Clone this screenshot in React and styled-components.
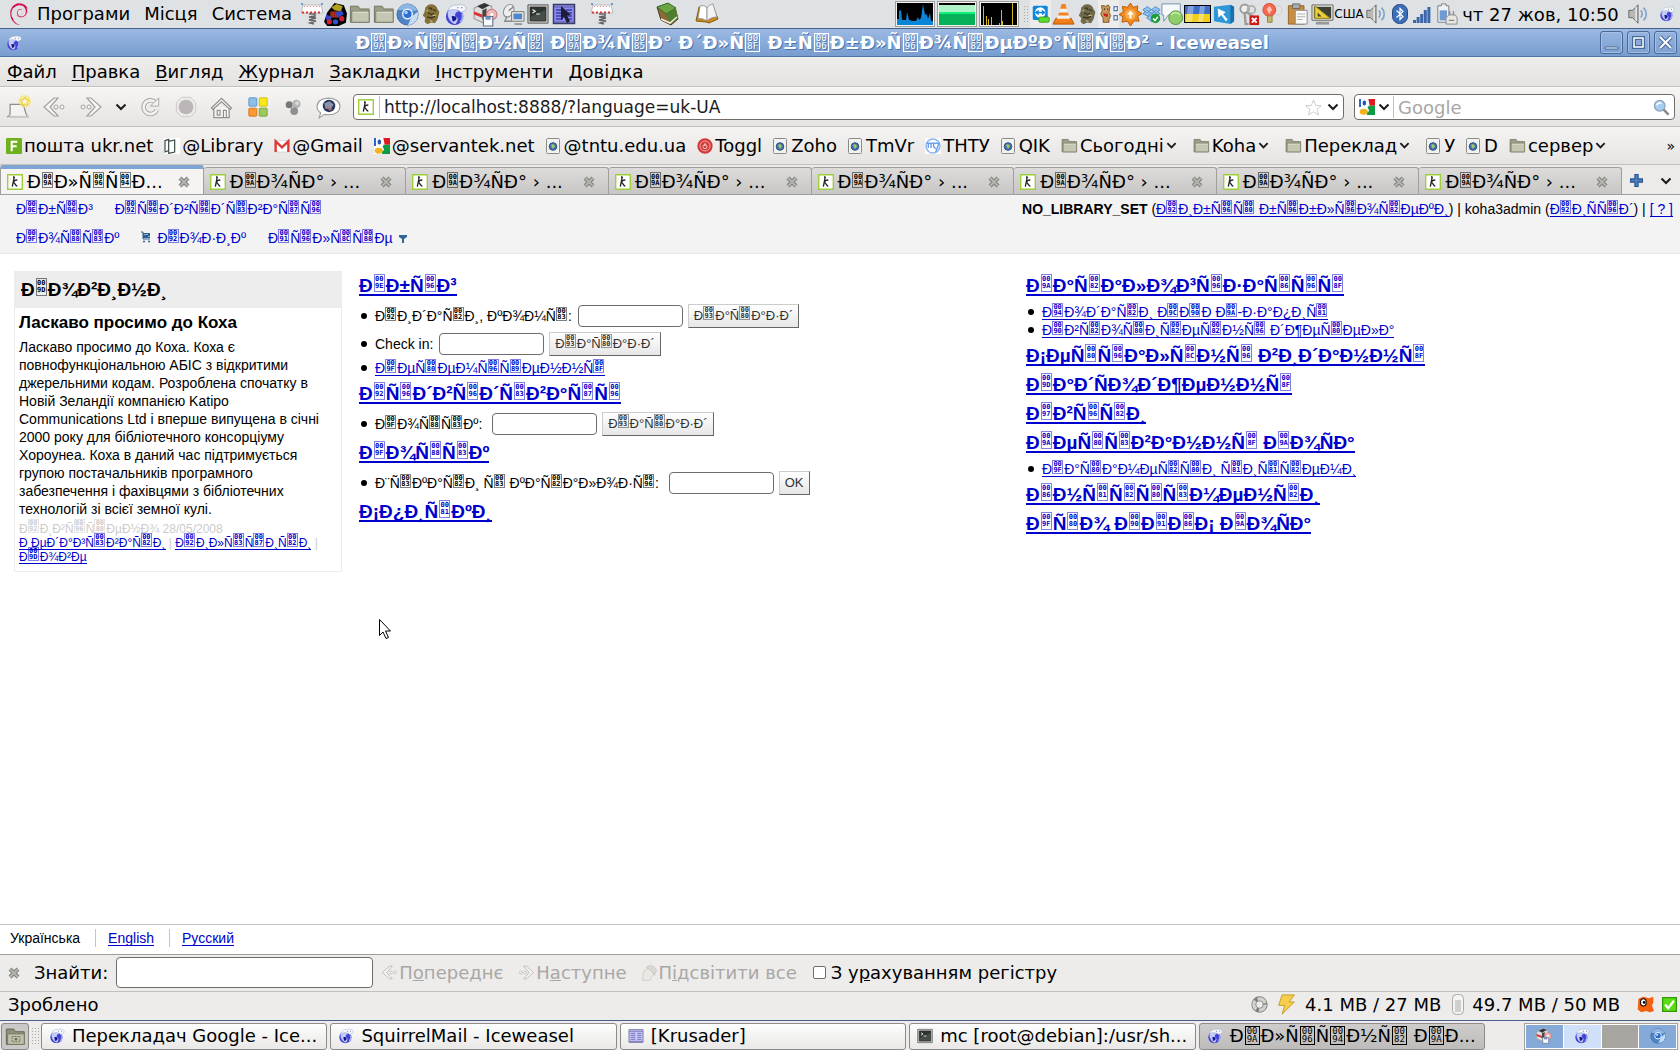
import React from 'react'
import styled, { createGlobalStyle, css } from 'styled-components'
import { SiDebian } from 'react-icons/si'

const GlobalStyle = createGlobalStyle`
    * { box-sizing: border-box; }
    html, body, #root { height: 100%; }
    body {
        margin: 0;
        background: #edeceb;
        color: #000;
        font-family: "DejaVu Sans", sans-serif;
        font-size: 18px;
        overflow: hidden;
    }
    button, input { font-family: inherit; font-size: inherit; color: inherit; }
    svg { display: block; flex: none; }
`

/* ---------- text decoded with the wrong charset ---------- */

const hexSizes = {
    small: css`width: 11px; height: 14px; margin: -4px 1px 0 0; font-size: 7px; line-height: 6px;`,
    tab: css`width: 11px; height: 16px; margin: -4px 1px 0; font-size: 7px; line-height: 6px; padding-top: 1px;`,
    heading: css`width: 11px; height: 18px; margin: -4px 1px 0; font-size: 7px; line-height: 7px; padding-top: 1px;`,
    title: css`
        width: 15px;
        height: 19px;
        margin: -4px 1px -3px;
        border-color: currentColor;
        font-size: 9px;
        line-height: 8px;
    `,
}

const HexBox = styled.span`
    display: inline-block;
    overflow: hidden;
    border: 1px solid color-mix(in srgb, currentColor 50%, transparent);
    font-family: "DejaVu Sans Mono", monospace;
    font-weight: ${p => (p.$size === 'title' ? 400 : 700)};
    text-align: center;
    white-space: pre;
    ${p => hexSizes[p.$size]}
`

// UTF-8 bytes shown as Latin-1, control bytes become small code boxes
function Garbled({ text, size = 'small', keepNel }) {
    const out = []
    let run = ''
    new TextEncoder().encode(text).forEach((b, i) => {
        if (b >= 0x80 && b < 0xa0) {
            if (b === 0x85 && !keepNel) return
            out.push(run)
            run = ''
            out.push(<HexBox key={i} $size={size}>{'00\n' + b.toString(16).toUpperCase()}</HexBox>)
        } else {
            run += String.fromCharCode(b)
        }
    })
    out.push(run)
    return <>{out}</>
}

/* ---------- icons ---------- */

const Svg = ({ s = 24, w, h, children, box = 24 }) => (
    <svg width={w || s} height={h || s} viewBox={`0 0 ${box} ${box}`} fill="none" aria-hidden="true">{children}</svg>
)

const SpringIcon = () => (
    <Svg s={24}>
        <path d="M3 3 1 11h22L21 3z" fill="#fff" stroke="#bbb" />
        <path d="M2 10.500h20" stroke="#d33" strokeWidth="2" strokeDasharray="2 2" />
        <path d="M4 4.500h16" stroke="#e88" strokeDasharray="1 2" />
        <path d="M1 2h2M21 2h2" stroke="#48c" strokeWidth="1.500" />
        <path d="M9 12h6v2l-6 1 7 1-7 2 7 1-6 2 4 1" stroke="#666" strokeWidth="1.500" />
    </Svg>
)
const TrainIcon = () => (
    <Svg s={25}>
        <path d="M4 10 11 1l9 2 3 8-1 9-7 3H4L1 19z" fill="#000" />
        <path d="m8 5 5-3 6 2-2 5-6-1z" fill="#b3a11d" />
        <path d="M7 9h8v6H7z" fill="#a62a1c" />
        <path d="m3 12 5 2v5l-5-2zM12 10l6-2 2 4-6 3z" fill="#3346c8" />
        <circle cx="6" cy="19" r="2.500" fill="#c23" /><circle cx="12" cy="19" r="2.500" fill="#35c" /><circle cx="18" cy="16" r="2.500" fill="#c23" />
    </Svg>
)
const FolderIcon = ({ s = 22 }) => (
    <Svg s={s}>
        <path d="M1.500 21V3.500h8.500l2 3h10V21z" fill="#9b9d84" stroke="#6f715c" />
        <path d="M3 20.500V9h19v12H3z" fill="#c5c7b2" stroke="#7c7e69" />
        <path d="M4 10h17" stroke="#e5e6da" />
    </Svg>
)
const ChromiumIcon = ({ s = 23 }) => (
    <Svg s={s}>
        <circle cx="12" cy="12" r="11" fill="#4f83c4" stroke="#406ba5" />
        <path d="M2 7a11 11 0 0 1 20 1h-9z" fill="#8db6e4" />
        <path d="M22.500 9a11 11 0 0 1-10 14l4-9z" fill="#c7dcf3" />
        <circle cx="12" cy="11.500" r="5" fill="#2d6fd0" stroke="#e5effa" strokeWidth="1.500" />
        <circle cx="10.500" cy="10" r="1.800" fill="#a9d0ff" />
    </Svg>
)
const BeastIcon = ({ c = '#83703a' }) => (
    <Svg s={21}>
        <path d="M8 1c4-2 10 0 11 5l2 3-2 8-3 5-4-1-5 2-3-3 1-4-3-3 2-4 1-5z" fill={c} />
        <path d="M9 5c2-1 4 0 3 2M14 6l3 2M8 10l4 2 3-1M7 15l5 1 4-2" stroke="#3d351b" strokeWidth="1.500" />
        <path d="m6 8 2-1M13 13l4 0M10 19l3 1" stroke="#c3b377" strokeWidth="1.400" />
    </Svg>
)
const WeaselIcon = ({ s = 16 }) => (
    <Svg s={s}>
        <circle cx="11" cy="14" r="9" fill="#4343d4" />
        <path d="M4 9c3-3 9-3 11 0-3 0-4 3-3 5 3 1 3 4 0 8-5-1-9-7-8-13z" fill="#c3cbfa" />
        <path d="M8 14c2-1 5 0 5 2s-3 4-4 3z" fill="#15158e" />
        <path d="M4 8c2-5 6-6 10-6 4-1 9 0 9 4 0 2-3 2-5 4-2-3-8-4-14-2z" fill="#f4f7fb" stroke="#a8b6cc" strokeWidth=".8" />
        <path d="M18 5h1M14 5h1" stroke="#345" strokeWidth="1.200" />
        <path d="M19 11c1 3 1 6-2 9" stroke="#a3abf4" strokeWidth="2" />
    </Svg>
)
const PackageIcon = ({ s = 25 }) => (
    <Svg s={s}>
        <path d="m1 6 8-4 9 2v12l-8 4-9-4z" fill="#ddd" stroke="#999" />
        <path d="m4 4 7-3 5 2-7 4z" fill="#333" /><path d="m1 9 8 3v3l-8-3z" fill="#d33" /><path d="m9 8 4-2v9l-4 2z" fill="#444" />
        <circle cx="18" cy="12" r="5" fill="#f1b8b8" stroke="#c77" /><circle cx="18" cy="12" r="1.500" fill="#fff" />
        <path d="M10 14h9v9h-9z" fill="#f8fafc" stroke="#5a6f8c" /><path d="M12 14h5v3h-5z" fill="#6f8fb7" />
    </Svg>
)
const SatelliteIcon = () => (
    <Svg s={23}>
        <ellipse cx="7" cy="8" rx="5" ry="7" transform="rotate(30 7 8)" fill="#eee" stroke="#888" />
        <path d="m7 8 5-4M5 14l-2 5h7" stroke="#888" strokeWidth="1.500" />
        <path d="M10 9h13v10H10z" fill="#e8e8e4" stroke="#777" /><path d="M12 11h9v6h-9z" fill="#4d88cc" />
        <path d="M13 22h8" stroke="#999" strokeWidth="2" />
    </Svg>
)
const TerminalIcon = ({ s = 22 }) => (
    <Svg s={s}>
        <path d="M1 2h22v20H1z" fill="#c7c8c4" stroke="#555" />
        <path d="M3.500 4.500h17v15h-17z" fill="#2e3632" stroke="#222" />
        <path d="m6 7 3 2-3 2M10 12h4" stroke="#e8efe9" strokeWidth="1.300" />
        <path d="M4 15 20 8v11H4z" fill="#fff" opacity=".12" />
    </Svg>
)
const KrusaderIcon = ({ s = 24, arrow }) => (
    <Svg s={s}>
        <path d="M1.500 2.500h21v19h-21z" fill={arrow ? '#8c8cf0' : '#c9c9f6'} stroke={arrow ? '#3b3b66' : '#7a7aa8'} strokeWidth="1.500" />
        <path d="M2 5h20M2 20h20" stroke="#5b5ba0" />
        <path d="M4 8h7M4 11h7M4 14h7M4 17h7M14 8h6M14 11h6M14 14h6M14 17h6" stroke={arrow ? '#3c3ca8' : '#6a6ab4'} strokeWidth="1.300" />
        {arrow && <path d="m9 4 10 9-4 .5 3 6-3 1.500-3-6-3 3z" fill="#1d1d36" />}
    </Svg>
)
const GreenBookIcon = () => (
    <Svg s={24}>
        <path d="m2 5 4 13 10 5 7-6-3-11-7-4z" fill="#8a6a3a" stroke="#4f3d1d" />
        <path d="m2 5 11-4 8 5-10 6z" fill="#6ca544" stroke="#3e6a24" />
        <path d="m11 12 10-6 2 10-7 6z" fill="#4d7f2e" /><path d="m6 17 9 4 7-6" stroke="#f4efe0" strokeWidth="1.500" />
    </Svg>
)
const OpenBookIcon = () => (
    <Svg s={24}>
        <path d="m1 19 3-14h7l2 2 5-2 5 12-9 4-3-1z" fill="#c98b1d" stroke="#8a5a0a" />
        <path d="m3 17 2-13c3-1 6 0 7 2v13c-3-2-6-3-9-2z" fill="#fff" stroke="#888" strokeWidth=".8" />
        <path d="M12 6c1-2 4-4 6-4l4 13c-4 0-7 1-10 4z" fill="#f3f3f3" stroke="#888" strokeWidth=".8" />
    </Svg>
)
const TeamViewerIcon = () => (
    <Svg s={18}>
        <rect x="1" y="1" width="20" height="19" rx="2" fill="#1086e0" />
        <circle cx="11" cy="10" r="7" fill="#fff" /><path d="M5 10h12M5 10l3-2v4zM17 10l-3-2v4z" stroke="#1086e0" strokeWidth="1.800" fill="#1086e0" />
        <rect x="9" y="16" width="14" height="7" rx="2" fill="#5cdc2d" stroke="#278a0c" />
    </Svg>
)
const ConeIcon = () => (
    <Svg s={23}>
        <path d="M1 22 4 16h16l3 6z" fill="#ef7d14" stroke="#b65606" />
        <path d="M10 1h4l5 17c-3 2-11 2-14 0z" fill="#f58220" />
        <path d="m8.500 6h7l1.200 4H7.200zM6.200 13h11.600l1 3.500H5.200z" fill="#f1f1f1" />
    </Svg>
)
const BearIcon = () => (
    <Svg s={20}>
        <path d="M3 2h3l2 1 3-2 2 3-1 6 2 4-2 4v4H5v-5L2 12l2-4z" fill="#c9995a" stroke="#6c4a1f" />
        <path d="m5 11 6 1-1 4-4-2z" fill="#c22" /><path d="M6 6h1M10 6h1" stroke="#000" strokeWidth="1.500" />
        <path d="M18 3h4v5h-4zM18 14h4v5h-4z" fill="#fff" stroke="#567daa" strokeWidth="1.500" />
    </Svg>
)
const SunIcon = () => (
    <Svg s={23}>
        <path d="m12 0 2.600 4.600L19.500 3l-.3 5.200L24 11l-4.400 2.800L21 19l-5.200-.4L12 24l-3.200-5L3 20l1.200-5.600L0 12l4.500-3L3.500 3.500l5.300 1z" fill="#ee8a20" stroke="#b85c08" />
        <circle cx="12" cy="12" r="5.500" fill="#f7ae4d" /><path d="m12 8 3.500 4H13v4h-2v-4H8.500z" fill="#fff" />
    </Svg>
)
const DropboxIcon = () => (
    <Svg s={19}>
        <path d="m7 2 5 4-6 4-5-4zM17 2l-5 4 6 4 5-4zM7 14l5-4-6-3-5 4zM17 14l-5-4 6-3 5 4zM6 16l6-4 6 4-6 5z" fill="#8cc4f2" stroke="#3a7fc0" />
        <circle cx="17" cy="17" r="6" fill="#1c9c3a" /><path d="m14 17 2.500 2.500L20 15" stroke="#fff" strokeWidth="2" />
    </Svg>
)
const ChatIcon = () => (
    <Svg s={22}>
        <path d="M1 1h20v12H8l-5 7v-7H1z" fill="#f7fafc" stroke="#6f8da8" />
        <circle cx="16" cy="16" r="7.500" fill="#8fce68" stroke="#4f8f32" /><path d="M11 13c2-3 7-4 10 0" stroke="#d2efc0" strokeWidth="1.500" />
    </Svg>
)
const FlagIcon = () => (
    <svg width="27" height="18" viewBox="0 0 27 18" aria-hidden="true">
        <path d="M0 0h27v18H0z" fill="#000" /><path d="M1 1h25v8H1z" fill="#3c6fc8" /><path d="M1 9h25v8H1z" fill="#f2cf1b" />
        <path d="M4 1h6l-2 16H2zM16 1h5l-2 16h-5z" fill="#fff" opacity=".35" />
    </svg>
)
const BlueArrowIcon = () => (
    <Svg s={22}>
        <path d="m1 4 18-2 4 2v16l-4 3L1 20z" fill="#2e97d8" /><path d="m19 2 4 2v16l-4 3z" fill="#1b6fae" />
        <path d="m5 6 9 4-3 2 5 6-2 2-5-7-3 3z" fill="#fff" />
    </Svg>
)
const KeysIcon = () => (
    <Svg s={23}>
        <circle cx="8" cy="6" r="4.500" fill="#eee" stroke="#9c9c98" strokeWidth="2" /><circle cx="15" cy="7" r="4" stroke="#b0b0ac" strokeWidth="2" />
        <path d="m8 10 1 12h3M9 9l9 6" stroke="#9c9c98" strokeWidth="2.500" />
        <path d="M13 13h10v10H13z" fill="#cc1b16" /><path d="m15.500 15.500 5 5M20.500 15.500l-5 5" stroke="#fff" strokeWidth="2" />
    </Svg>
)
const BulbIcon = () => (
    <Svg s={22}>
        <circle cx="17" cy="8" r="5" fill="#e2e2e2" stroke="#ccc" />
        <circle cx="8" cy="7.500" r="7" fill="#f2694f" stroke="#d3472e" /><path d="m8 3 3 4-3 5-3-5z" fill="#fbc3b6" />
        <path d="M6 14h5v7H6z" fill="#c7b76a" stroke="#8f8038" />
    </Svg>
)
const ClipboardIcon = () => (
    <Svg s={22}>
        <path d="M1.500 3h17v20h-17z" fill="#c98f3e" stroke="#8f5f1c" /><path d="M6 1h8v5H6z" fill="#aaa" stroke="#666" />
        <path d="M9 8h13v15H9z" fill="#f9f9f8" stroke="#888" /><path d="M11 12h9M11 15h9M11 18h6" stroke="#aaa" />
    </Svg>
)
const RulerScreenIcon = () => (
    <Svg s={23}>
        <path d="M1 2h22v16H1z" fill="#e1e1dc" stroke="#666" /><path d="M3 4h18v12H3z" fill="#3e4138" />
        <path d="M4 3v13h16z" fill="#e9cf3a" stroke="#9a8412" /><path d="M7 10v4h4z" fill="#3e4138" /><path d="M5 21h14" stroke="#999" strokeWidth="3" />
    </Svg>
)
const SpeakerIcon = () => (
    <Svg s={22}>
        <path d="M2 8h4l6-6v20l-6-6H2z" fill="#b9bab6" stroke="#5e605c" /><path d="M10 4v16" stroke="#eee" strokeWidth="1.500" />
        <path d="M15 8c2 2 2 6 0 8M18 5c4 4 4 10 0 14" stroke="#7fa2cc" strokeWidth="1.800" />
    </Svg>
)
const BluetoothIcon = () => (
    <svg width="16" height="20" viewBox="0 0 16 20" fill="none" aria-hidden="true">
        <rect x=".5" y=".5" width="15" height="19" rx="7" fill="#3c6fb8" stroke="#234a86" />
        <path d="m4.500 6.500 6.500 6-3 3v-11l3 3-6.500 6" stroke="#fff" strokeWidth="1.200" />
    </svg>
)
const SignalIcon = () => (
    <svg width="18" height="17" viewBox="0 0 18 17" aria-hidden="true">
        {[3, 6, 9, 13, 16].map((h, i) => <rect key={h} x={i * 3.600} y={17 - h} width="3" height={h} fill="#3b66ab" />)}
    </svg>
)
const BatteryIcon = () => (
    <Svg s={22}>
        <path d="M6 1h5v2h3v18H2V3h4z" fill="#eef2f7" stroke="#777" /><path d="M4 8h8v11H4z" fill="#6f9bd0" />
        <path d="M11 23v-7l3-3h7l2 3v7z" fill="#e6e6e3" stroke="#888" /><path d="M15 13V9M19 13V9M14 19h6" stroke="#888" strokeWidth="1.500" />
    </Svg>
)

const NewTabIcon = () => (
    <Svg s={25}>
        <path d="M1 21c3 0 3-1 3-12h12c2 0 2 12 6 12" fill="#f4f3f2" stroke="#8e8d8a" strokeWidth="1.200" />
        <path d="M3 21h19" stroke="#c9c8c5" strokeWidth="2" />
        <circle cx="18" cy="6" r="6" fill="#f8e36b" opacity=".7" /><path d="m18 2 1.200 2.800 3 .2-2.300 2 .8 3-2.700-1.600L15.300 10l.8-3-2.300-2 3-.2z" fill="#fffbe0" stroke="#e6bd1b" strokeWidth=".7" />
    </Svg>
)
const ArrowIcon = ({ flip, s = 24 }) => (
    <Svg s={s}>
        <g transform={flip ? 'matrix(-1 0 0 1 24 0)' : undefined}>
            <path d="M12 3h4l-8 9 8 9h-4L2 12z" fill="#f6f6f5" stroke="#a2a19e" strokeWidth="1.200" />
            <circle cx="14" cy="12" r="2" fill="#f6f6f5" stroke="#a2a19e" /><circle cx="20" cy="12" r="2" fill="#f6f6f5" stroke="#a2a19e" />
        </g>
    </Svg>
)
const ChevronIcon = ({ s = 11 }) => (
    <Svg s={s} box={12}><path d="m1.500 3.500 4.500 4.500 4.500-4.500" stroke="#1a1a1a" strokeWidth="2" /></Svg>
)
const ReloadIcon = () => (
    <Svg s={22}>
        <path d="M18 7a7.500 7.500 0 1 0 1.500 8" stroke="#a5a4a1" strokeWidth="5" /><path d="M18 7a7.500 7.500 0 1 0 1.500 8" stroke="#f2f1f0" strokeWidth="3" />
        <path d="M21.500 2v9h-9z" fill="#f2f1f0" stroke="#a5a4a1" />
    </Svg>
)
const StopIcon = () => (
    <Svg s={22}>
        <path d="M7 1.500h10L22.500 7v10L17 22.500H7L1.500 17V7z" fill="#ecebea" stroke="#c9c8c6" /><circle cx="12" cy="12" r="8" fill="#bcb6b8" />
    </Svg>
)
const HomeIcon = () => (
    <Svg s={23}>
        <path d="M4 12v10.500h16V12" fill="#f5f5f4" stroke="#8f8e8b" strokeWidth="1.300" />
        <path d="M1.500 12.500 12 2.500l10.500 10L21 14l-9-8-9 8z" fill="#f5f5f4" stroke="#8f8e8b" strokeWidth="1.200" />
        <path d="M7.500 20v-5h3v5zM14 22v-7h3v7" stroke="#8f8e8b" strokeWidth="1.200" />
    </Svg>
)
const GridIcon = () => (
    <Svg s={20}>
        <rect x="1" y="1" width="9.500" height="10" rx="1" fill="#8cc0e8" stroke="#4b8fc4" /><rect x="13.500" y="1" width="9.500" height="10" rx="1" fill="#fbe916" stroke="#c8b400" />
        <rect x="1" y="13.500" width="9.500" height="9.500" rx="1" fill="#fd9a35" stroke="#d46c05" /><rect x="13.500" y="13.500" width="9.500" height="9.500" rx="1" fill="#9cc95b" stroke="#6b9c2a" />
    </Svg>
)
const BallsIcon = () => (
    <Svg s={17}>
        <circle cx="6" cy="8" r="5" fill="#777" /><circle cx="16" cy="7" r="6" fill="#b5b5b5" /><circle cx="13" cy="17" r="5.500" fill="#8f8f8f" /><circle cx="17" cy="6" r="2.500" fill="#ddd" />
    </Svg>
)
const SpeechIcon = () => (
    <Svg s={25}>
        <path d="M12 3c7 0 11 3.500 11 8s-4 8-11 8c-2 0-3 0-4-.5L3 22l1.500-5C2 15.500 1 13.500 1 11c0-4.500 4-8 11-8z" fill="#fff" stroke="#9a9a98" />
        <circle cx="12.500" cy="10.500" r="6" fill="#26365f" /><path d="m8 8 5-2 4 3-3 5-5-1z" fill="#8d92a6" /><path d="m10 11 3 4 3-1z" fill="#b56b52" />
    </Svg>
)
const StarIcon = () => (
    <Svg s={17}><path d="m12 1.500 3 7.500 8 .5-6 5 2 8-7-4.500-7 4.500 2-8-6-5 8-.5z" fill="#fff" stroke="#c9c8c6" strokeWidth="1.300" /></Svg>
)
const GoogleIcon = () => (
    <Svg s={16}>
        <path d="M0 0h24v24H0z" fill="#fff" /><path d="M14 0h10v10h-8z" fill="#e01a22" /><path d="M13 10h11v14H12z" fill="#0d9b46" />
        <path d="M0 0h3v12H0z" fill="#2c67c8" /><ellipse cx="8" cy="6" rx="3.500" ry="4.500" fill="#2458b8" stroke="#fff" strokeWidth="1.500" />
        <path d="m10 11 5 5-1 4-4-4z" fill="#fff" /><ellipse cx="7" cy="19" rx="6" ry="4.500" fill="#f3b31c" /><circle cx="12" cy="11" r="2" fill="#fff" />
    </Svg>
)
const SearchIcon = () => (
    <Svg s={17}>
        <circle cx="9.500" cy="9.500" r="7.500" fill="#a9cdf0" stroke="#8aa2bd" strokeWidth="1.800" /><path d="M5 9c1-3 4-4 7-3" stroke="#fff" strokeWidth="2" />
        <path d="m15 15 7 7" stroke="#888" strokeWidth="3.500" />
    </Svg>
)
const FIcon = () => (
    <Svg s={16}>
        <rect width="24" height="24" rx="2" fill="#6fb01e" /><path d="M8.500 20V5.500H17M8 12.500h8" stroke="#fff" strokeWidth="3" />
    </Svg>
)
const LibraryIcon = () => (
    <Svg s={16}>
        <path d="M0 0h24v24H0z" fill="#fff" /><path d="M1.500 4 7 2v17l-5.500 2zM7 5l9-2v18l-9 2z" stroke="#3b4a45" strokeWidth="1.800" />
    </Svg>
)
const GmailIcon = () => (
    <Svg s={16}>
        <path d="M1 4h22v17H1z" fill="#fff" stroke="#ccc" /><path d="M2.500 21V5l9.500 9 9.500-9v16" stroke="#db3b36" strokeWidth="3.500" />
    </Svg>
)
const PageIcon = () => (
    <svg width="16" height="16" viewBox="0 0 16 16" fill="none" aria-hidden="true">
        <rect x=".5" y=".5" width="13" height="15" rx="1" fill="#f2f2f0" stroke="#8a8b86" />
        <circle cx="7" cy="8.500" r="3.800" fill="#4374b3" stroke="#2c4f84" /><path d="m5 7 2-1 2 2-2 3z" fill="#a8c55a" />
    </svg>
)
const TogglIcon = () => (
    <Svg s={16}>
        <circle cx="12" cy="12" r="11.500" fill="#d23b3b" /><circle cx="12" cy="12" r="7.500" stroke="#f3a3a0" strokeWidth="1.500" /><path d="M12 8v4" stroke="#fff" strokeWidth="1.500" /><circle cx="12" cy="13" r="3" stroke="#f7c4c0" strokeWidth="1.500" />
    </Svg>
)
const TntuIcon = () => (
    <Svg s={16}>
        <path d="M0 0h24v24H0z" fill="#fff" /><circle cx="12" cy="12" r="10.500" stroke="#8ab6f2" strokeWidth="2.200" />
        <path d="M2 8h20M5 8v7M9 8v7M13 8v5l3 3M21 8l-5 13" stroke="#6a9fee" strokeWidth="2.200" />
    </Svg>
)
const KohaIcon = () => (
    <Svg s={16}>
        <path d="M1 1h22v22H1z" fill="#fff" stroke="#9fce3b" strokeWidth="2.200" />
        <path d="M11 4 8 19M9 4.500h2M9 13c2-3 5-4.500 6.500-3.500M9.500 13c3 0 3 5.500 6 5" stroke="#222" strokeWidth="2" />
    </Svg>
)
const CloseIcon = () => (
    <Svg s={12} box={12}>
        <path d="m2 2 8 8M10 2l-8 8" stroke="#7f807a" strokeWidth="4" /><path d="m2 2 8 8M10 2l-8 8" stroke="#b4b5ae" strokeWidth="2" />
    </Svg>
)
const PlusIcon = () => (
    <Svg s={13} box={12}><path d="M4.500.5h3v4h4v3h-4v4h-3v-4h-4v-3h4z" fill="#4d7fc0" stroke="#2a568f" /></Svg>
)
const CartIcon = () => (
    <svg width="10" height="12" viewBox="0 0 10 12" fill="none" aria-hidden="true">
        <path d="M0 1h2v7h7" stroke="#2f5f92" /><path d="M2 2h7v5H2z" fill="#2f5f92" /><path d="M4 3v1M6 3v1M8 5v1" stroke="#fff" /><circle cx="3" cy="10.500" r="1" fill="#2f5f92" /><circle cx="8" cy="10.500" r="1" fill="#2f5f92" />
    </svg>
)
const HighlightIcon = () => (
    <Svg s={17}>
        <path d="M2 23 4 10l6-4 8 8-6 9z" fill="#e9e8e2" stroke="#b9b8b2" /><path d="M7 5c5-5 12-3 15 4l-3 7c-2-6-7-9-12-11z" fill="#d2d1ca" stroke="#b4b3ac" />
    </Svg>
)
const RecycleIcon = () => (
    <Svg s={17}>
        <circle cx="12" cy="12" r="8" stroke="#80807e" strokeWidth="7" /><circle cx="12" cy="12" r="8" stroke="#d2d2d0" strokeWidth="4.500" strokeDasharray="13 4" />
    </Svg>
)
const BoltIcon = () => (
    <Svg s={21}><path d="M7 1h14l-6 8h6L7 23l3-10H3z" fill="#f5cf4b" stroke="#c2951a" /></Svg>
)
const CylinderIcon = () => (
    <svg width="15" height="21" viewBox="-3 0 15 21" fill="none" aria-hidden="true">
        <rect x=".5" y=".5" width="11" height="20" rx="4" fill="#f4f4f3" stroke="#aaa" /><rect x="3" y="6" width="6" height="12" fill="#cfcfce" />
    </svg>
)
const FishIcon = () => (
    <Svg s={17}>
        <path d="M2 4 9 1l8 2 6-2v9l-2 3 3 8-6 2-5-2-7 2-5-4z" fill="#f5600e" /><ellipse cx="9" cy="9" rx="4" ry="5" fill="#fff" stroke="#000" strokeWidth="1.500" /><circle cx="10" cy="9" r="1.800" fill="#000" />
    </Svg>
)
const CheckIcon = () => (
    <Svg s={15}>
        <path d="M1 1h22v22H1z" fill="#5cdc16" stroke="#2f9a08" strokeWidth="2" /><path d="m5 12 5 6 9-12" stroke="#fff" strokeWidth="3.500" />
    </Svg>
)
const DesktopIcon = () => (
    <Svg s={21}>
        <path d="M1.500 21V3.500H10l2 3h10V21z" fill="#8d8f78" stroke="#5f614e" /><path d="M3 9h19v12H3z" fill="#bfc1ab" stroke="#74765f" />
        <rect x="8" y="12" width="9" height="6" stroke="#6b6d58" strokeDasharray="2 1" /><circle cx="12.500" cy="15" r="1.500" fill="#6b6d58" />
    </Svg>
)

/* ---------- desktop panel ---------- */

const Screen = styled.div`
    display: flex;
    flex-direction: column;
    min-height: 100vh;
`

const TopPanel = styled.header`
    display: flex;
    align-items: center;
    height: 28px;
    padding-left: 8px;
    background: #dfe2e5;
    flex: none;
`

const PanelMenu = styled.button`
    border: 0;
    background: none;
    padding: 0;
    margin-right: ${p => p.$end ? 8 : 14}px;
    line-height: 26px;
`

const Slot = styled.span`
    display: flex;
    align-items: center;
    justify-content: center;
    flex: none;
    width: ${p => p.$w}px;
    height: 28px;
    background: ${p => (p.$light ? '#edeceb' : 'none')};
    font-size: ${p => (p.$small ? 12 : 18)}px;
    white-space: nowrap;
`

const PanelRight = styled.div`
    display: flex;
    align-items: center;
    margin-left: auto;
`

const Graph = styled.span`
    display: block;
    width: 40px;
    height: 26px;
    margin-right: 2px;
    padding: 1px;
    border: 1px solid #9d9c99;
    background: #f4f3f2;
`

const Grip = styled.span`
    width: ${p => p.$w}px;
    height: 18px;
    margin: 0 2px;
    background-image: radial-gradient(#a8a7a5 1px, transparent 1px);
    background-size: 3px 3px;
`

const launchers = [
    [23, <SpringIcon />], [25, <TrainIcon />], [24, <FolderIcon />], [23, <FolderIcon />], [24, <ChromiumIcon />],
    [24, <BeastIcon />], [25, <WeaselIcon s={23} />], [34, <PackageIcon />], [22, <SatelliteIcon />],
    [27, <TerminalIcon />], [26, <KrusaderIcon arrow />], [50, <SpringIcon />], [28], [24, <GreenBookIcon />],
    [16], [24, <OpenBookIcon />],
]

function Graphs() {
    return (
        <>
            <Graph>
                <svg width="36" height="22" viewBox="0 0 36 22" aria-hidden="true">
                    <path d="M0 0h36v22H0z" fill="#000" />
                    <path d="M0 22v-6l2 0V8l2-1 1 10h4l1-8 2 8 4 1 3 0 2-4 1 3 2-2 1-7 1-7 1 6 1 4 2 1 1 4 2-6 1 8h2v5z" fill="#0a86d8" />
                </svg>
            </Graph>
            <Graph>
                <svg width="36" height="22" viewBox="0 0 36 22" aria-hidden="true">
                    <path d="M0 0h36v22H0z" fill="#000" /><path d="M0 2h36v7H0z" fill="#aef3c8" /><path d="M0 9h36v2H0z" fill="#0df07a" /><path d="M0 11h36v11H0z" fill="#04b058" />
                </svg>
            </Graph>
            <Graph>
                <svg width="36" height="22" viewBox="0 0 36 22" aria-hidden="true">
                    <path d="M0 0h36v22H0z" fill="#000" />
                    <path d="M2.500 3v19M5.500 13v9M7.500 16v6M10.500 14v8M18.500 20v2M20.500 7v15M21.500 18v4M31.500 0v22" stroke="#d9b81a" />
                </svg>
            </Graph>
        </>
    )
}

function DesktopPanel() {
    return (
        <TopPanel>
            <SiDebian size={22} color="#d70a53" />
            <Slot $w={7} />
            <PanelMenu>Програми</PanelMenu>
            <PanelMenu>Місця</PanelMenu>
            <PanelMenu $end>Система</PanelMenu>
            {launchers.map(([w, icon], i) => <Slot key={i} $w={w}>{icon}</Slot>)}
            <PanelRight>
                <Graphs />
                <Grip $w={5} />
                <Slot $w={21} $light><TeamViewerIcon /></Slot>
                <Slot $w={25}><ConeIcon /></Slot>
                <Slot $w={22}><BeastIcon c="#6f6a4d" /></Slot>
                <Slot $w={21} $light><BearIcon /></Slot>
                <Slot $w={23}><SunIcon /></Slot>
                <Slot $w={19}><DropboxIcon /></Slot>
                <Slot $w={22}><ChatIcon /></Slot>
                <Slot $w={29}><FlagIcon /></Slot>
                <Slot $w={24}><BlueArrowIcon /></Slot>
                <Slot $w={25}><KeysIcon /></Slot>
                <Slot $w={24}><BulbIcon /></Slot>
                <Slot $w={25}><ClipboardIcon /></Slot>
                <Slot $w={25}><RulerScreenIcon /></Slot>
                <Slot $w={28} $small>США</Slot>
                <Slot $w={26}><SpeakerIcon /></Slot>
                <Slot $w={21}><BluetoothIcon /></Slot>
                <Slot $w={24}><SignalIcon /></Slot>
                <Slot $w={25}><BatteryIcon /></Slot>
                <Slot $w={163}>чт 27 жов, 10:50</Slot>
                <Slot $w={31}><SpeakerIcon /></Slot>
                <Slot $w={27}><WeaselIcon s={16} /></Slot>
            </PanelRight>
        </TopPanel>
    )
}

/* ---------- window chrome ---------- */

const TitleBar = styled.div`
    display: flex;
    align-items: center;
    height: 29px;
    padding: 0 3px 0 6px;
    border-top: 1px solid #46628b;
    border-bottom: 1px solid #4d74a8;
    background: linear-gradient(#9cb9e3, #779dcf);
    flex: none;
`

const TitleText = styled.h1`
    flex: 1;
    margin: 0;
    padding-left: 6px;
    text-align: center;
    font-size: 18px;
    line-height: 26px;
    font-weight: 700;
    color: #fff;
    text-shadow: 1px 1px 0 #4a74ac;
    white-space: nowrap;
`

const WindowButton = styled.button`
    display: flex;
    align-items: center;
    justify-content: center;
    width: 23px;
    height: 23px;
    margin-left: 4px;
    padding: 0;
    border: 1px solid #47699a;
    border-radius: 3px;
    background: linear-gradient(#96b4de, #7da1d2);
    box-shadow: inset 0 0 0 1px #a5c0e6;
`

const MenuBar = styled.nav`
    display: flex;
    gap: 15px;
    height: 30px;
    padding: 0 7px;
    border-bottom: 1px solid #c3c1be;
    background: linear-gradient(#eeedec, #e4e3e1);
    flex: none;
`

const MenuItem = styled.button`
    border: 0;
    padding: 0;
    background: none;
    line-height: 29px;

    u { text-underline-offset: 2px; }
`

const ToolBar = styled.div`
    display: flex;
    align-items: center;
    height: 40px;
    padding: 0 5px;
    border-top: 1px solid #fafafa;
    border-bottom: 1px solid #c3c1be;
    background: linear-gradient(#f6f5f4, #e5e4e2);
    flex: none;
`

const ToolButton = styled.button`
    display: flex;
    align-items: center;
    justify-content: center;
    width: ${p => p.$w}px;
    height: 28px;
    padding: 0;
    border: 0;
    background: none;
`

const FieldFrame = styled.div`
    display: flex;
    align-items: center;
    gap: ${p => p.$gap}px;
    height: 26px;
    padding: 0 4px;
    border: 1px solid #6f6d69;
    border-radius: 4px;
    background: #fff;
    flex: ${p => p.$flex};
    margin-left: ${p => p.$ml}px;
`

const FieldInput = styled.input`
    flex: 1;
    min-width: 0;
    height: 22px;
    padding: 0 0 0 4px;
    border: 0;
    border-left: 1px solid #c3c1be;
    outline: 0;
    background: none;
    color: #1c1c1c;
    font-size: ${p => (p.$big ? 18 : 17)}px;

    &::placeholder { color: #a9a7a4; opacity: 1; }
`

const BookmarkBar = styled.nav`
    display: flex;
    align-items: center;
    height: 38px;
    padding: 0 5px 0 6px;
    border-bottom: 1px solid #c3c1be;
    background: linear-gradient(#f5f4f3, #e5e4e2);
    flex: none;
`

const Bookmark = styled.a`
    display: flex;
    align-items: center;
    gap: 2px;
    margin-right: ${p => (p.$folder ? 16 : 11)}px;
    color: #000;
    text-decoration: none;
    white-space: nowrap;
`

const Overflow = styled.button`
    margin-left: auto;
    padding: 0;
    border: 0;
    background: none;
    font-size: 14px;
`

const TabStrip = styled.div`
    display: flex;
    align-items: flex-end;
    height: 30px;
    border-bottom: 1px solid #a19f9b;
    background: #ecebea;
    flex: none;
`

const Tab = styled.div`
    display: flex;
    align-items: center;
    flex: 1;
    min-width: 0;
    height: ${p => (p.$active ? 29 : 27)}px;
    padding: 1px 13px 0 6px;
    border: 1px solid #a19f9b;
    border-bottom: 0;
    border-left-width: ${p => (p.$active ? 1 : 0)}px;
    border-radius: 3px 3px 0 0;
    background: linear-gradient(#dddcdb, #c7c6c4);
    ${p => p.$active && css`
        border-top: 4px solid #7ea4d4;
        background: #f5f4f3;
    `}
`

const TabLabel = styled.button`
    flex: 1;
    min-width: 0;
    padding: 0 0 0 4px;
    border: 0;
    background: none;
    text-align: left;
    white-space: nowrap;
    line-height: 24px;
`

const CloseButton = styled.button`
    display: flex;
    padding: 0;
    border: 0;
    background: none;
`

const TabTools = styled.div`
    display: flex;
    align-items: center;
    justify-content: space-between;
    width: 58px;
    height: 27px;
    padding: 0 8px;
    flex: none;
`

const menus = [['Ф', 'айл'], ['П', 'равка'], ['В', 'игляд'], ['Ж', 'урнал'], ['З', 'акладки'], ['І', 'нструменти'], ['Д', 'овідка']]

const bookmarks = [
    ['пошта ukr.net', <FIcon />], ['@Library', <LibraryIcon />], ['@Gmail', <GmailIcon />], ['@servantek.net', <GoogleIcon />],
    ['@tntu.edu.ua', <PageIcon />], ['Toggl', <TogglIcon />], ['Zoho', <PageIcon />], ['TmVr', <PageIcon />],
    ['ТНТУ', <TntuIcon />], ['QIK', <PageIcon />], ['Сьогодні', <FolderIcon s={17} />, true], ['Koha', <FolderIcon s={17} />, true],
    ['Переклад', <FolderIcon s={17} />, true], ['У', <PageIcon />], ['D', <PageIcon />], ['сервер', <FolderIcon s={17} />, true],
]

function WindowChrome() {
    return (
        <>
            <TitleBar>
                <WeaselIcon s={16} />
                <TitleText><Garbled text="Клієнт Коха для бібліотекарів" size="title" keepNel /> - Iceweasel</TitleText>
                <WindowButton aria-label="Minimize"><Svg s={17} box={17}><path d="M2 13h13v2H2z" fill="#fff" stroke="#47699a" /></Svg></WindowButton>
                <WindowButton aria-label="Maximize"><Svg s={17} box={17}><path d="M4 4h9v9H4z" stroke="#47699a" strokeWidth="4" /><path d="M4 4h9v9H4z" stroke="#fff" strokeWidth="1.500" /></Svg></WindowButton>
                <WindowButton aria-label="Close"><Svg s={17} box={17}><path d="m3 3 11 11M14 3 3 14" stroke="#47699a" strokeWidth="4" /><path d="m3 3 11 11M14 3 3 14" stroke="#fff" strokeWidth="2" /></Svg></WindowButton>
            </TitleBar>
            <MenuBar>
                {menus.map(([key, rest]) => <MenuItem key={key}><u>{key}</u>{rest}</MenuItem>)}
            </MenuBar>
            <ToolBar>
                <ToolButton $w={27} aria-label="New tab"><NewTabIcon /></ToolButton>
                <ToolButton $w={43} aria-label="Back"><ArrowIcon /></ToolButton>
                <ToolButton $w={32} aria-label="Forward"><ArrowIcon flip /></ToolButton>
                <ToolButton $w={27} aria-label="History"><ChevronIcon s={12} /></ToolButton>
                <ToolButton $w={32} aria-label="Reload"><ReloadIcon /></ToolButton>
                <ToolButton $w={40} aria-label="Stop"><StopIcon /></ToolButton>
                <ToolButton $w={31} aria-label="Home"><HomeIcon /></ToolButton>
                <ToolButton $w={41} aria-label="Speed dial"><GridIcon /></ToolButton>
                <ToolButton $w={31} aria-label="Add-ons"><BallsIcon /></ToolButton>
                <ToolButton $w={38} aria-label="Messages"><SpeechIcon /></ToolButton>
                <FieldFrame $flex="1" $ml={6} $gap={5}>
                    <KohaIcon />
                    <FieldInput aria-label="Address" defaultValue="http://localhost:8888/?language=uk-UA" />
                    <StarIcon />
                    <ChevronIcon s={12} />
                </FieldFrame>
                <FieldFrame $flex="0 0 321px" $ml={10} $gap={3}>
                    <GoogleIcon />
                    <ChevronIcon s={12} />
                    <FieldInput $big aria-label="Search" placeholder="Google" />
                    <SearchIcon />
                </FieldFrame>
            </ToolBar>
            <BookmarkBar>
                {bookmarks.map(([label, icon, folder]) => (
                    <Bookmark key={label} href="#" $folder={folder}>{icon}{label}{folder && <ChevronIcon />}</Bookmark>
                ))}
                <Overflow aria-label="More bookmarks">»</Overflow>
            </BookmarkBar>
            <TabStrip>
                {[...Array(8)].map((_, i) => (
                    <Tab key={i} $active={i === 0}>
                        <KohaIcon />
                        <TabLabel>
                            {i === 0 ? <><Garbled text="Кліє" size="tab" />Ð...</> : <><Garbled text="Коха" size="tab" /> › ...</>}
                        </TabLabel>
                        <CloseButton aria-label="Close tab"><CloseIcon /></CloseButton>
                    </Tab>
                ))}
                <TabTools>
                    <CloseButton aria-label="Open tab"><PlusIcon /></CloseButton>
                    <CloseButton aria-label="List tabs"><ChevronIcon s={12} /></CloseButton>
                </TabTools>
            </TabStrip>
        </>
    )
}

/* ---------- page ---------- */

const Page = styled.main`
    display: flex;
    flex-direction: column;
    flex: 1;
    background: #fff;
    font-family: "Liberation Sans", Arial, sans-serif;
    font-size: 14px;
`

const PageHeader = styled.div`
    display: flex;
    justify-content: space-between;
    height: 59px;
    padding: 0 7px 0 16px;
    border-bottom: 1px solid #e6e6e6;
    background: #f3f3f3;
    line-height: 29px;
`

const HeaderLinks = styled.div`
    display: flex;
    gap: 22px;
    height: 29px;
`

const PlainLink = styled.a`
    display: flex;
    align-items: baseline;
    gap: 6px;
    color: #0000cc;
    text-decoration: none;
    white-space: nowrap;
`

const Link = styled.a`
    color: #0000cc;
    text-decoration: none;
    white-space: nowrap;
    box-shadow: inset 0 -1px 0 #0000cc;
`

const Columns = styled.div`
    display: grid;
    grid-template-columns: 328fr 650fr 650fr;
    column-gap: 17px;
    align-items: start;
    flex: 1;
    padding: 15px 4px 0 14px;
`

const News = styled.section`
    margin-top: 2px;
    border: 1px solid #ececec;
    padding-bottom: 7px;
`

const NewsHeading = styled.h3`
    margin: -1px -1px 0;
    padding: 0 7px;
    background: #ededed;
    font-size: 19px;
    line-height: 37px;
`

const NewsTitle = styled.h4`
    margin: 0;
    padding: 0 4px;
    font-size: 17px;
    line-height: 30px;
`

const NewsText = styled.p`
    margin: 0 0 4px;
    padding: 0 16px 0 4px;
    line-height: 18px;
`

const NewsMeta = styled.div`
    padding: 0 4px;
    font-size: 12px;
    line-height: 14px;
    color: #ccc;
`

const Heading = styled.h3`
    margin: 0;
    height: 29px;
    font-size: 19px;
    line-height: 34px;
    white-space: nowrap;

    a { box-shadow: inset 0 -2px 0 #0000cc; }
`

const List = styled.ul`
    display: flex;
    flex-direction: column;
    gap: ${p => p.$gap || 0}px;
    margin: 0;
    padding: 5px 0 0;
    list-style: none;
`

const Item = styled.li`
    display: flex;
    align-items: center;
    height: ${p => (p.$form ? 25 : 18)}px;
    white-space: nowrap;

    &::before {
        content: "";
        width: 6px;
        height: 6px;
        margin: 0 8px 0 2px;
        border-radius: 3px;
        background: #000;
        flex: none;
    }
`

const TextBox = styled.input`
    width: 105px;
    height: 22px;
    margin: 0 5px 0 6px;
    border: 1px solid #6d6d6d;
    border-radius: 4px;
    background: #fff;
`

const SubmitButton = styled.button`
    height: 24px;
    padding: 0 5px;
    border: 1px solid;
    border-color: #ccc #666 #666 #ccc;
    background: linear-gradient(#fff, #e6e6e6);
    color: #333;
    font-size: 13px;
    white-space: nowrap;
`

const Languages = styled.div`
    display: flex;
    align-items: center;
    gap: 15px;
    height: 30px;
    padding: 0 10px 4px;
    border-top: 1px solid #c4c4c4;
`

const Divider = styled.span`
    width: 1px;
    height: 18px;
    margin-right: -3px;
    background: #c4c4c4;
`

function FormItem({ id, label, button, gap }) {
    return (
        <Item $form>
            <label htmlFor={id}>{label}{gap && '\u00a0'}</label>
            <TextBox id={id} />
            <SubmitButton>{button || <Garbled text="Гаразд" />}</SubmitButton>
        </Item>
    )
}

const H = ({ text }) => <Heading><Link href="#"><Garbled text={text} size="heading" /></Link></Heading>
const L = ({ text }) => <Link href="#"><Garbled text={text} /></Link>

function KohaPage() {
    return (
        <Page>
            <PageHeader>
                <div>
                    <HeaderLinks>
                        <PlainLink href="#"><span><Garbled text="Обіг" /></span></PlainLink>
                        <PlainLink href="#"><span><Garbled text="Відвідувачі" /></span></PlainLink>
                    </HeaderLinks>
                    <HeaderLinks>
                        <PlainLink href="#"><span><Garbled text="Пошук" /></span></PlainLink>
                        <PlainLink href="#"><CartIcon /><span><Garbled text="Возик" /></span></PlainLink>
                        <PlainLink href="#">
                            <span><Garbled text="Більше" /></span>
                            <Svg s={8} box={8}><path d="M0 0h8v2L5 4v4H3V4L0 2z" fill="#336699" /></Svg>
                        </PlainLink>
                    </HeaderLinks>
                </div>
                <div>
                    <b>NO_LIBRARY_SET</b> (<L text="Вибір бібліотеки" />) | koha3admin (<L text="Вихід" />) | <Link href="#">[ ? ]</Link>
                </div>
            </PageHeader>
            <Columns>
                <News>
                    <NewsHeading><Garbled text="Новини" size="heading" /></NewsHeading>
                    <NewsTitle>Ласкаво просимо до Коха</NewsTitle>
                    <NewsText>
                        Ласкаво просимо до Коха. Коха є повнофункціональною АБІС з відкритими джерельними кодам. Розроблена
                        спочатку в Новій Зеландії компанією Katipo Communications Ltd і вперше випущена в січні 2000 року для
                        бібліотечного консорціуму Хороунеа. Коха в даний час підтримується групою постачальників програмного
                        забезпечення і фахівцями з бібліотечних технологій зі всієї земної кулі.
                    </NewsText>
                    <NewsMeta>
                        <Garbled text="Вивішено" /> 28/05/2008<br />
                        <L text="Редагувати" /> | <L text="Вилучити" /> | <L text="Нове" />
                    </NewsMeta>
                </News>
                <div>
                    <H text="Обіг" />
                    <List $gap={3}>
                        <FormItem id="checkout" label={<><Garbled text="Видати, кому" />:</>} />
                        <FormItem id="checkin" label="Check in:" />
                        <Item><L text="Переміщення" /></Item>
                    </List>
                    <H text="Відвідувачі" />
                    <List>
                        <FormItem id="patron" gap label={<><Garbled text="Пошук" />:</>} />
                    </List>
                    <H text="Пошук" />
                    <List>
                        <FormItem id="catalog" gap label={<><Garbled text="Шукати у каталозі" />:</>} button="OK" />
                    </List>
                    <H text="Списки" />
                </div>
                <div>
                    <H text="Каталогізація" />
                    <List>
                        <Item><L text="Додати МАРК-запис" /></Item>
                        <Item><L text="Авторитетні джерела" /></Item>
                    </List>
                    <H text="Серіальні видання" />
                    <H text="Надходження" />
                    <H text="Звіти" />
                    <H text="Керування Коха" />
                    <List>
                        <Item><L text="Параметри системи" /></Item>
                    </List>
                    <H text="Інструменти" />
                    <H text="Про АБІС Коха" />
                </div>
            </Columns>
            <Languages>
                <span>Українська</span>
                <Divider />
                <Link href="#">English</Link>
                <Divider />
                <Link href="#">Русский</Link>
            </Languages>
        </Page>
    )
}

/* ---------- bottom bars ---------- */

const FindBar = styled.div`
    display: flex;
    align-items: center;
    height: 37px;
    padding: 0 0 1px 8px;
    border-top: 1px solid #a19f9b;
    background: #edeceb;
    flex: none;
`

const FindLabel = styled.label`
    display: flex;
    align-items: center;
    margin-left: ${p => p.$ml}px;
    gap: ${p => p.$gap}px;
    white-space: nowrap;
`

const FindInput = styled.input`
    width: 257px;
    height: 31px;
    border: 1px solid #6f6d69;
    border-radius: 4px;
    background: #fff;
`

const FindButton = styled.button`
    display: flex;
    align-items: center;
    gap: 1px;
    margin-left: ${p => p.$ml}px;
    padding: 0;
    border: 0;
    background: none;
    color: #a9a7a4;
    white-space: pre;

    svg { opacity: .7; }
`

const CheckBox = styled.input`
    appearance: none;
    width: 13px;
    height: 13px;
    margin: 0;
    border: 1px solid #6f6d69;
    border-radius: 2px;
    background: #fff;
`

const StatusBar = styled.div`
    display: flex;
    align-items: center;
    height: 29px;
    padding: 0 3px 3px 8px;
    border-top: 1px solid #c3c1be;
    flex: none;
`

const StatusRight = styled.div`
    display: flex;
    align-items: center;
    gap: 8px;
    margin-left: auto;
`

const Fill = styled.span`
    width: ${p => p.$w}px;
`

const TaskBar = styled.footer`
    display: flex;
    align-items: center;
    height: 30px;
    padding: 1px 2px 0 1px;
    border-top: 1px solid #46628b;
    background: #edeceb;
    flex: none;
`

const DesktopButton = styled.button`
    display: flex;
    align-items: center;
    justify-content: center;
    width: 28px;
    height: 27px;
    padding: 0;
    border: 1px solid #8d8b88;
    border-radius: 3px;
    background: #cbc9c7;
`

const Task = styled.button`
    display: flex;
    align-items: center;
    gap: 7px;
    flex: 1;
    min-width: 0;
    height: 27px;
    margin-right: 3px;
    padding: 0 7px;
    border: 1px solid #8d8b88;
    border-radius: 3px;
    background: ${p => (p.$active ? 'linear-gradient(#cfcdcb, #bebcba)' : 'linear-gradient(#fefefe, #e9e8e6)')};
    text-align: left;
    line-height: 24px;
    white-space: nowrap;
`

const Pager = styled.div`
    display: flex;
    gap: 1px;
    width: 154px;
    height: 27px;
    margin-left: 36px;
    padding: 1px;
    border: 1px solid #a5a29e;
    background: #fff;
    flex: none;
`

const Workspace = styled.button`
    display: flex;
    align-items: center;
    justify-content: center;
    flex: 1;
    padding: 0;
    border: 0;
    background: ${p => p.$bg};
`

const Pointer = styled.div`
    position: fixed;
    left: 378px;
    top: 618px;
`

function BottomBars() {
    return (
        <>
            <FindBar>
                <CloseButton aria-label="Close find bar"><CloseIcon /></CloseButton>
                <FindLabel $ml={14} $gap={8}>Знайти:<FindInput /></FindLabel>
                <FindButton $ml={8} disabled><ArrowIcon s={17} /><span>П<u>о</u>переднє</span></FindButton>
                <FindButton $ml={15} disabled><ArrowIcon s={17} flip /><span>Н<u>а</u>ступне</span></FindButton>
                <FindButton $ml={14} disabled><HighlightIcon /><span>П<u>і</u>дсвітити все</span></FindButton>
                <FindLabel $ml={16} $gap={5}><CheckBox type="checkbox" /><span>З у<u>р</u>ахуванням регістру</span></FindLabel>
            </FindBar>
            <StatusBar>
                Зроблено
                <StatusRight>
                    <RecycleIcon />
                    <BoltIcon />
                    4.1 MB / 27 MB
                    <CylinderIcon />
                    49.7 MB / 50 MB
                    <Fill $w={1} />
                    <FishIcon />
                    <CheckIcon />
                </StatusRight>
            </StatusBar>
            <TaskBar>
                <DesktopButton aria-label="Show desktop"><DesktopIcon /></DesktopButton>
                <Grip $w={8} />
                <Task><WeaselIcon s={16} />Перекладач Google - Ice...</Task>
                <Task><WeaselIcon s={16} />SquirrelMail - Iceweasel</Task>
                <Task><KrusaderIcon s={16} />[Krusader]</Task>
                <Task><TerminalIcon s={16} />mc [root@debian]:/usr/sh...</Task>
                <Task $active>
                    <WeaselIcon s={16} />
                    <span><Garbled text="Клієнт К" size="title" />Ð...</span>
                </Task>
                <Pager>
                    <Workspace $bg="#86aad8" aria-label="Workspace 1"><PackageIcon s={16} /></Workspace>
                    <Workspace $bg="#cfe0f8" aria-label="Workspace 2"><WeaselIcon s={16} /></Workspace>
                    <Workspace $bg="#a8a4a0" aria-label="Workspace 3" />
                    <Workspace $bg="#86aad8" aria-label="Workspace 4"><ChromiumIcon s={16} /></Workspace>
                </Pager>
            </TaskBar>
        </>
    )
}

function App() {
    return (
        <Screen>
            <GlobalStyle />
            <DesktopPanel />
            <WindowChrome />
            <KohaPage />
            <BottomBars />
            <Pointer>
                <svg width="14" height="22" viewBox="0 0 14 22" aria-hidden="true">
                    <path d="M1.500 1.500v16l3.500-3.500 3 6.500 2.500-1-3-6.500h5z" fill="#fff" stroke="#000" />
                </svg>
            </Pointer>
        </Screen>
    )
}

export default App
